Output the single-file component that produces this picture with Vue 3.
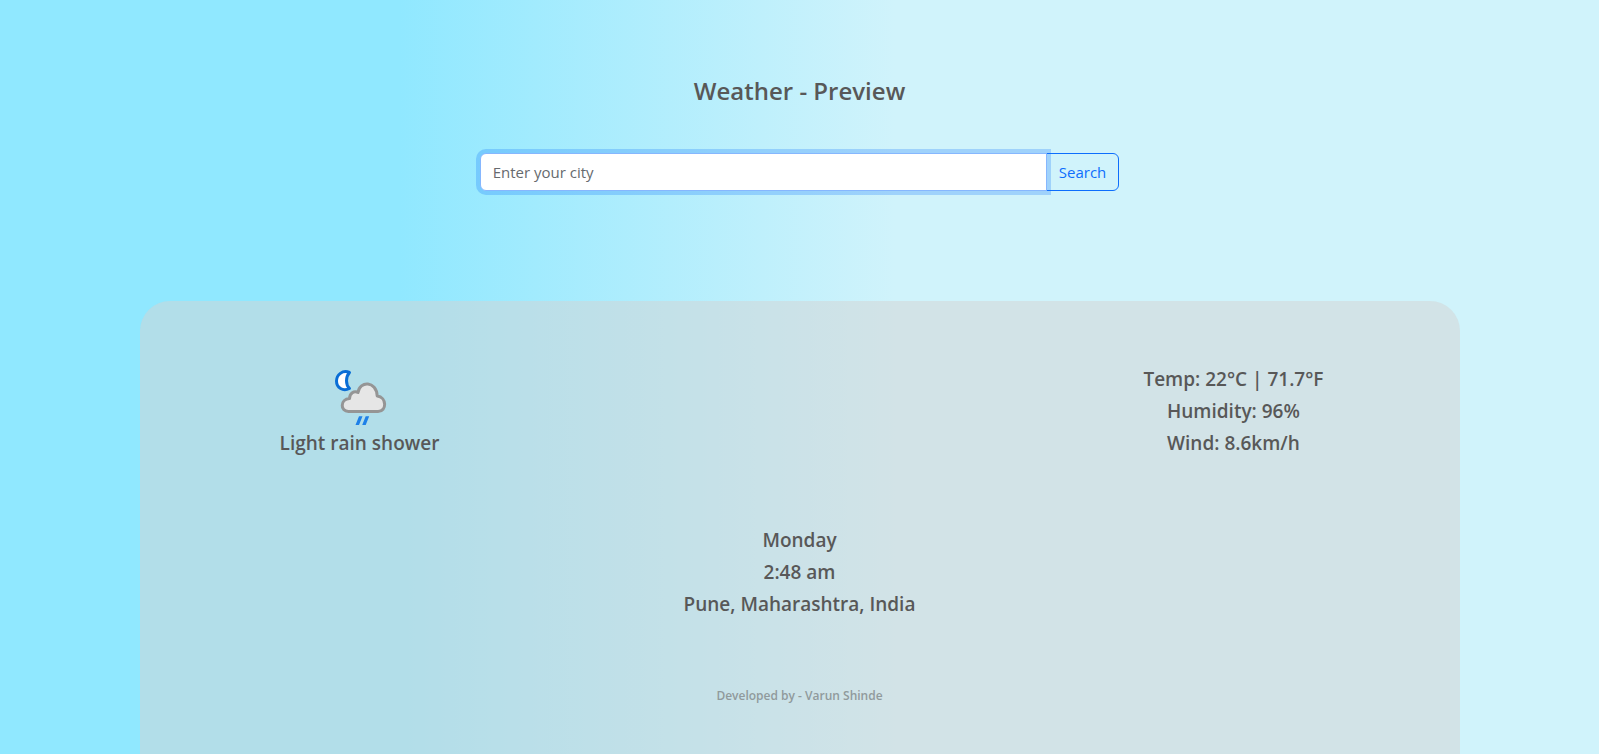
<script setup>
import { ref } from 'vue'

const city = ref('')
const readings = ['Temp: 22°C | 71.7°F', 'Humidity: 96%', 'Wind: 8.6km/h']
const place = ['Monday', '2:48 am', 'Pune, Maharashtra, India']
</script>

<template>
  <div class="page">
    <h1 class="title">Weather - Preview</h1>
    <form class="search" @submit.prevent>
      <input v-model="city" class="field" type="text" placeholder="Enter your city" aria-label="City" />
      <button class="submit" type="submit">Search</button>
    </form>
    <main class="card">
      <div class="summary">
        <section class="group">
          <svg class="icon" viewBox="0 0 64 64" aria-hidden="true">
            <path d="M21.500 9.500C14.500 6.500 8.500 12 8.500 18C8.500 25 15 28.500 21.500 25.500C17.500 21.500 17.500 14 21.500 9.500Z" fill="#fff" stroke="#0a6ed6" stroke-width="3" stroke-linejoin="round" />
            <path d="M20.500 48.500C12 48.500 12 36 21.500 35.600C21.800 30 26 27.500 30 29.500C31.500 17.500 48.500 17.500 49.200 33C59 34 59 48.500 50 48.500Z" fill="#e6e6e6" stroke="#959595" stroke-width="3" stroke-linejoin="round" />
            <path d="M31 53.200H34.500L31 62H27.500ZM37.700 53.200H41.200L37.700 62H34.200Z" fill="#1e80e8" />
          </svg>
          <p>Light rain shower</p>
        </section>
        <section class="group">
          <p v-for="line in readings" :key="line">{{ line }}</p>
        </section>
      </div>
      <section class="group place">
        <p v-for="line in place" :key="line">{{ line }}</p>
      </section>
      <footer class="credit">Developed by - Varun Shinde</footer>
    </main>
  </div>
</template>

<style>
body {
  margin: 0;
}
</style>

<style scoped>
.page {
  display: flex;
  flex-direction: column;
  align-items: center;
  box-sizing: border-box;
  min-height: 100vh;
  padding-top: 76px;
  background: linear-gradient(90deg, #90e8ff 25%, #d0f3fb 56%);
  color: #585858;
  font-family: "Segoe UI", "Open Sans", "Noto Sans", sans-serif;
}

.title {
  margin: 0;
  font-size: 24px;
  line-height: 30px;
  font-weight: 600;
}

.search {
  display: flex;
  width: 40%;
  margin-top: 47px;
}

.field,
.submit {
  box-sizing: border-box;
  height: 38px;
  padding: 6px 12px;
  font: inherit;
  font-size: 15px;
  line-height: 24px;
}

.field {
  position: relative;
  z-index: 1;
  flex: 1;
  min-width: 0;
  border: 1px solid #86b7fe;
  border-radius: 6px 0 0 6px;
  background: #fff;
  color: #212529;
  outline: 0;
  box-shadow: 0 0 0 4px rgba(13, 110, 253, 0.25);
}

.field::placeholder {
  color: #666a6e;
  opacity: 1;
}

.submit {
  margin-left: -1px;
  border: 1px solid #0d6efd;
  border-radius: 0 6px 6px 0;
  background: transparent;
  color: #0d6efd;
}

.card {
  box-sizing: border-box;
  display: flex;
  flex: 1;
  flex-direction: column;
  width: 100%;
  max-width: 1320px;
  margin-top: 110px;
  padding: 62px 0 48px;
  border-radius: 30px 30px 0 0;
  background: rgba(211, 211, 211, 0.5);
  text-align: center;
}

.summary {
  display: flex;
  justify-content: space-between;
  padding: 0 136px 0 130px;
}

.group {
  min-width: 180px;
  font-size: 19px;
  line-height: 32px;
  font-weight: 600;
}

.group p {
  margin: 0;
}

.icon {
  display: block;
  width: 64px;
  height: 64px;
  margin: 0 auto;
}

.place {
  margin-top: 65px;
}

.credit {
  margin-top: 66px;
  color: #909a9c;
  font-size: 12px;
  line-height: 20px;
  font-weight: 600;
}
</style>
